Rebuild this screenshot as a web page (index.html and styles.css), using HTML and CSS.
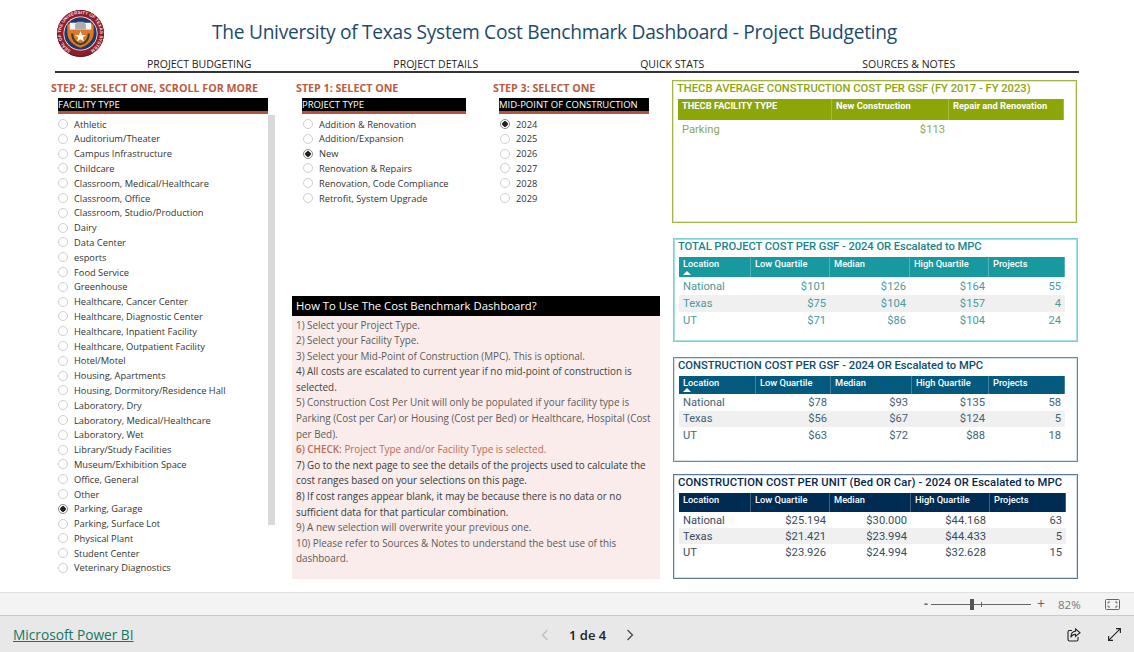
FILE: index.html
```html
<!DOCTYPE html>
<html lang="en">
<head>
<meta charset="utf-8">
<title>The University of Texas System Cost Benchmark Dashboard</title>
<link rel="stylesheet" href="styles.css">
</head>
<body>
<div class="canvas">
  <header class="head">
    <svg class="logo" viewBox="0 0 48 48" aria-hidden="true">
      <defs><path id="ring" d="M24 24m-20 0a20 20 0 1 1 40 0a20 20 0 1 1 -40 0"/></defs>
      <circle cx="24" cy="24" r="24" fill="#8f1d2c"/>
      <circle cx="24" cy="24" r="23.4" fill="none" stroke="#5e1320" stroke-width="1"/>
      <text class="logo-text" transform="rotate(-60 24 24)"><textPath href="#ring">SEAL OF THE UNIVERSITY OF TEXAS SYSTEM</textPath></text>
      <circle cx="24" cy="24" r="17.4" fill="#fff"/>
      <circle cx="24" cy="24" r="16.6" fill="#1f3a68"/>
      <path d="M10.5 14.5H37.5V23C37.5 31 31 36.5 24 38.5C17 36.5 10.5 31 10.5 23Z" fill="#e2762a"/>
      <path d="M13 13H35V20H13Z" fill="#f4f4f2"/>
      <path d="M18.5 20V14.5L21 12H27L29.5 14.5V20Z" fill="#a9aeb4"/>
      <path d="M15.5 24C15.5 31 20 34.5 24 35C28 34.5 32.500 31 32.500 24" fill="none" stroke="#2d4a2a" stroke-width="2"/>
      <path d="M24 21.500L25.500 25.500L29.700 25.600L26.300 28.100L27.600 32.200L24 29.800L20.400 32.200L21.700 28.100L18.300 25.600L22.500 25.500Z" fill="#fff"/>
    </svg>
    <h1 class="title">The University of Texas System Cost Benchmark Dashboard - Project Budgeting</h1>
  </header>
  <nav class="nav">
    <a>PROJECT BUDGETING</a>
    <a>PROJECT DETAILS</a>
    <a>QUICK STATS</a>
    <a>SOURCES &amp; NOTES</a>
  </nav>
  <main class="main">
    <section class="col-facility">
      <h2 class="step">STEP 2: SELECT ONE, SCROLL FOR MORE</h2>
      <div class="slicer-head facility-head">FACILITY TYPE</div>
      <div class="scroll-wrap">
        <ul class="list">
          <li class="opt"><i class="radio"></i>Athletic</li>
          <li class="opt"><i class="radio"></i>Auditorium/Theater</li>
          <li class="opt"><i class="radio"></i>Campus Infrastructure</li>
          <li class="opt"><i class="radio"></i>Childcare</li>
          <li class="opt"><i class="radio"></i>Classroom, Medical/Healthcare</li>
          <li class="opt"><i class="radio"></i>Classroom, Office</li>
          <li class="opt"><i class="radio"></i>Classroom, Studio/Production</li>
          <li class="opt"><i class="radio"></i>Dairy</li>
          <li class="opt"><i class="radio"></i>Data Center</li>
          <li class="opt"><i class="radio"></i>esports</li>
          <li class="opt"><i class="radio"></i>Food Service</li>
          <li class="opt"><i class="radio"></i>Greenhouse</li>
          <li class="opt"><i class="radio"></i>Healthcare, Cancer Center</li>
          <li class="opt"><i class="radio"></i>Healthcare, Diagnostic Center</li>
          <li class="opt"><i class="radio"></i>Healthcare, Inpatient Facility</li>
          <li class="opt"><i class="radio"></i>Healthcare, Outpatient Facility</li>
          <li class="opt"><i class="radio"></i>Hotel/Motel</li>
          <li class="opt"><i class="radio"></i>Housing, Apartments</li>
          <li class="opt"><i class="radio"></i>Housing, Dormitory/Residence Hall</li>
          <li class="opt"><i class="radio"></i>Laboratory, Dry</li>
          <li class="opt"><i class="radio"></i>Laboratory, Medical/Healthcare</li>
          <li class="opt"><i class="radio"></i>Laboratory, Wet</li>
          <li class="opt"><i class="radio"></i>Library/Study Facilities</li>
          <li class="opt"><i class="radio"></i>Museum/Exhibition Space</li>
          <li class="opt"><i class="radio"></i>Office, General</li>
          <li class="opt"><i class="radio"></i>Other</li>
          <li class="opt"><i class="radio on"></i>Parking, Garage</li>
          <li class="opt"><i class="radio"></i>Parking, Surface Lot</li>
          <li class="opt"><i class="radio"></i>Physical Plant</li>
          <li class="opt"><i class="radio"></i>Student Center</li>
          <li class="opt"><i class="radio"></i>Veterinary Diagnostics</li>
        </ul>
        <div class="scrollbar"></div>
      </div>
    </section>
    <section class="col-middle">
      <div class="slicers">
        <div class="slicer-project">
          <h2 class="step">STEP 1: SELECT ONE</h2>
          <div class="slicer-head project-head">PROJECT TYPE</div>
          <ul class="list list-inset">
            <li class="opt"><i class="radio"></i>Addition &amp; Renovation</li>
            <li class="opt"><i class="radio"></i>Addition/Expansion</li>
            <li class="opt"><i class="radio on"></i>New</li>
            <li class="opt"><i class="radio"></i>Renovation &amp; Repairs</li>
            <li class="opt"><i class="radio"></i>Renovation, Code Compliance</li>
            <li class="opt"><i class="radio"></i>Retrofit, System Upgrade</li>
          </ul>
        </div>
        <div class="slicer-mpc">
          <h2 class="step">STEP 3: SELECT ONE</h2>
          <div class="slicer-head mpc-head">MID-POINT OF CONSTRUCTION</div>
          <ul class="list list-inset">
            <li class="opt"><i class="radio on"></i>2024</li>
            <li class="opt"><i class="radio"></i>2025</li>
            <li class="opt"><i class="radio"></i>2026</li>
            <li class="opt"><i class="radio"></i>2027</li>
            <li class="opt"><i class="radio"></i>2028</li>
            <li class="opt"><i class="radio"></i>2029</li>
          </ul>
        </div>
      </div>
      <article class="help">
        <h2 class="help-title">How To Use The Cost Benchmark Dashboard?</h2>
        <div class="help-body">
          <p>1) Select your Project Type.</p>
          <p>2) Select your Facility Type.</p>
          <p>3) Select your Mid-Point of Construction (MPC). This is optional.</p>
          <p class="strong">4) All costs are escalated to current year if no mid-point of construction is selected.</p>
          <p>5) Construction Cost Per Unit will only be populated if your facility type is Parking (Cost per Car) or Housing (Cost per Bed) or Healthcare, Hospital (Cost per Bed).</p>
          <p class="check"><b>6) CHECK:</b> Project Type and/or Facility Type is selected.</p>
          <p class="dark">7) Go to the next page to see the details of the projects used to calculate the cost ranges based on your selections on this page.</p>
          <p class="dark">8) If cost ranges appear blank, it may be because there is no data or no sufficient data for that particular combination.</p>
          <p>9) A new selection will overwrite your previous one.</p>
          <p>10) Please refer to Sources &amp; Notes to understand the best use of this dashboard.</p>
        </div>
      </article>
    </section>
    <section class="col-tables">
      <div class="card card-thecb">
        <h3 class="card-title">THECB AVERAGE CONSTRUCTION COST PER GSF (FY 2017 - FY 2023)</h3>
        <div class="tbl">
          <div class="th">THECB FACILITY TYPE</div><div class="th">New Construction</div><div class="th">Repair and Renovation</div>
          <div class="td">Parking</div><div class="td num">$113</div><div class="td num"></div>
        </div>
      </div>
      <div class="card card-total">
        <h3 class="card-title">TOTAL PROJECT COST PER GSF - 2024 OR Escalated to MPC</h3>
        <div class="tbl">
          <div class="th sorted">Location</div><div class="th">Low Quartile</div><div class="th">Median</div><div class="th">High Quartile</div><div class="th">Projects</div>
          <div class="td">National</div><div class="td num">$101</div><div class="td num">$126</div><div class="td num">$164</div><div class="td num">55</div>
          <div class="td alt">Texas</div><div class="td alt num">$75</div><div class="td alt num">$104</div><div class="td alt num">$157</div><div class="td alt num">4</div>
          <div class="td">UT</div><div class="td num">$71</div><div class="td num">$86</div><div class="td num">$104</div><div class="td num">24</div>
        </div>
      </div>
      <div class="card card-cons">
        <h3 class="card-title">CONSTRUCTION COST PER GSF - 2024 OR Escalated to MPC</h3>
        <div class="tbl">
          <div class="th sorted">Location</div><div class="th">Low Quartile</div><div class="th">Median</div><div class="th">High Quartile</div><div class="th">Projects</div>
          <div class="td">National</div><div class="td num">$78</div><div class="td num">$93</div><div class="td num">$135</div><div class="td num">58</div>
          <div class="td alt">Texas</div><div class="td alt num">$56</div><div class="td alt num">$67</div><div class="td alt num">$124</div><div class="td alt num">5</div>
          <div class="td">UT</div><div class="td num">$63</div><div class="td num">$72</div><div class="td num">$88</div><div class="td num">18</div>
        </div>
      </div>
      <div class="card card-unit">
        <h3 class="card-title">CONSTRUCTION COST PER UNIT (Bed OR Car) - 2024 OR Escalated to MPC</h3>
        <div class="tbl">
          <div class="th">Location</div><div class="th">Low Quartile</div><div class="th">Median</div><div class="th">High Quartile</div><div class="th">Projects</div>
          <div class="td">National</div><div class="td num">$25.194</div><div class="td num">$30.000</div><div class="td num">$44.168</div><div class="td num">63</div>
          <div class="td alt">Texas</div><div class="td alt num">$21.421</div><div class="td alt num">$23.994</div><div class="td alt num">$44.433</div><div class="td alt num">5</div>
          <div class="td">UT</div><div class="td num">$23.926</div><div class="td num">$24.994</div><div class="td num">$32.628</div><div class="td num">15</div>
        </div>
      </div>
    </section>
  </main>
</div>
<div class="statusbar">
  <span class="zoom-sign">-</span>
  <div class="slider"><span class="thumb"></span><span class="tick"></span></div>
  <span class="zoom-plus">+</span>
  <span class="zoom-val">82%</span>
  <svg class="fit" viewBox="0 0 15 11" aria-hidden="true"><rect x=".5" y=".5" width="14" height="10" rx="1" fill="none" stroke="#666"/><path d="M3 4.500V3H5M10 3H12V4.500M12 6.500V8H10M5 8H3V6.500" fill="none" stroke="#666"/></svg>
</div>
<footer class="footer">
  <a class="pbi">Microsoft Power BI</a>
  <div class="pager">
    <svg class="chev" viewBox="0 0 8 12" aria-hidden="true"><path d="M6.500 1L1.500 6L6.500 11" fill="none" stroke="#bdbdbd" stroke-width="1.200"/></svg>
    <span class="page-no">1 de 4</span>
    <svg class="chev" viewBox="0 0 8 12" aria-hidden="true"><path d="M1.500 1L6.500 6L1.500 11" fill="none" stroke="#444" stroke-width="1.200"/></svg>
  </div>
  <div class="foot-icons">
    <svg class="share" viewBox="0 0 14 14" aria-hidden="true"><path d="M5 2.500H2.500Q1 2.500 1 4V11.500Q1 13 2.500 13H9.500Q11 13 11 11.500V9" fill="none" stroke="#222" stroke-width="1.100"/><path d="M8.500 1L13 4.700L8.500 8.400V6.200C6.500 6.200 5 7 3.800 9.200C3.900 6 5.500 3.300 8.500 3.200Z" fill="none" stroke="#222" stroke-width="1.100"/></svg>
    <svg class="expand" viewBox="0 0 13 13" aria-hidden="true"><path d="M8 .6H12.400V5M12.400 .6L.6 12.400M.6 8V12.400H5" fill="none" stroke="#222" stroke-width="1.100"/></svg>
  </div>
</footer>
</body>
</html>
```
FILE: styles.css
```css
* { box-sizing: border-box; }
html, body { margin: 0; padding: 0; }
body { width: 1134px; height: 652px; overflow: hidden; background: #fff; font-family: "Open Sans", "Noto Sans", sans-serif; color: #333; }
h1, h2, h3, p, ul { margin: 0; padding: 0; }
ul { list-style: none; }

.canvas { height: 592px; overflow: hidden; }
.head { display: flex; align-items: center; height: 57px; padding: 10px 0 0 57px; }
.logo { width: 47px; height: 47px; flex: none; }
.logo-text { font: 700 4.600px "Liberation Sans", sans-serif; fill: #f2dfe0; }
.title { margin-left: 108px; margin-top: -5px; font-size: 19.200px; font-weight: 400; color: #1d4a6b; white-space: nowrap; letter-spacing: -.29px; }

.nav { display: grid; grid-template-columns: repeat(4, 236.5px); height: 14px; margin: 0 55px; padding-left: 26px; font-size: 10.5px; line-height: 15px; color: #222; text-align: center; box-shadow: 0 2px 0 #333; }
.main { display: grid; grid-template-columns: 241px 380px 407px; padding: 10px 0 0 51px; }

.step { font-size: 10.700px; line-height: 14px; font-weight: 700; color: #b95c3f; white-space: nowrap; }
.slicer-head { height: 16px; margin-top: 3px; background: #000; border-bottom: 3px solid #b5533c; color: #fff; font-size: 9.500px; line-height: 14px; white-space: nowrap; }
.facility-head { width: 210px; margin-left: 7px; }
.project-head { width: 164px; margin-left: 6px; }
.mpc-head { width: 150px; margin-left: 6px; }

.scroll-wrap { display: flex; align-items: flex-start; margin-left: 7px; }
.list { width: 210px; padding-top: 2.700px; }
.list-inset { padding-left: 7px; }
.opt { display: flex; align-items: center; gap: 6px; height: 14.800px; font-size: 9.300px; color: #333; white-space: nowrap; }
.radio { width: 10px; height: 10px; flex: none; border: 1px solid #cfcfcf; border-radius: 50%; background: #fff; }
.radio.on { border-color: #888; background: radial-gradient(circle, #222 0 2.500px, #fff 3px); }
.scrollbar { width: 7px; height: 410px; margin-top: 1px; background: #d9d9d9; }

.col-middle { display: flex; flex-direction: column; }
.slicers { display: grid; grid-template-columns: 197px 170px; height: 215px; padding-left: 4px; }
.help { width: 368px; height: 283px; background: #f9ecea; }
.help-title { height: 20px; padding-left: 4px; background: #000; color: #fff; font-size: 11.300px; line-height: 19px; font-weight: 400; }
.help-body { padding: 1.500px 4px 0; font-size: 9.900px; line-height: 15.600px; color: #5c5c5c; }
.help-body .strong { color: #444; }
.help-body .dark { color: #3a3a3a; }
.help-body .check { color: #bd6a55; }
.help-body .check b { font-weight: 600; }

.col-tables { display: flex; flex-direction: column; margin-top: -1px; }
.card { width: 405px; border: 1px solid; padding: 2px 0 0 5px; margin-left: 1px; }
.card-title { margin-left: -1px; font-family: Roboto, "Liberation Sans", sans-serif; font-size: 11.200px; line-height: 12px; font-weight: 500; white-space: nowrap; }
.tbl { display: grid; width: 386px; margin-top: 4px; font-family: Roboto, "Liberation Sans", sans-serif; }
.th { position: relative; padding: 1px 4px 0; color: #fff; font-size: 9.300px; line-height: 12px; font-weight: 500; white-space: nowrap; border-right: 1px solid rgba(255,255,255,.25); }
.td { display: flex; align-items: center; padding: 0 4px; font-size: 11.200px; }
.num { justify-content: flex-end; }
.alt { background: #f0f0f0; }
.sorted::after { content: ""; position: absolute; left: 4px; bottom: 2px; border: 4px solid transparent; border-top: 0; border-bottom: 4px solid #fff; }

.card-thecb { height: 143px; margin-left: 0; border-color: #a3b545; box-shadow: inset 0 0 0 1px #e3e8bd; }
.card-thecb .card-title { color: #8fa608; }
.card-thecb .tbl { grid-template-columns: 154px 117px 115px; grid-template-rows: 21px 18px; }
.card-thecb .th { background: #8da507; font-weight: 700; }
.card-thecb .td { color: #8fa652; }

.card-total { height: 104px; margin-top: 15px; border-color: #7fcdce; box-shadow: inset 0 0 0 1px #a8dfe0; }
.card-total .card-title { color: #17858c; letter-spacing: -.05px; }
.card-total .tbl { grid-template-columns: 72px 79px 80px 79px 76px; grid-template-rows: 20px 18px 17px 17px; }
.card-total .th { background: #18999f; }
.card-total .td { color: #4b9a9e; }

.card-cons { height: 105px; margin-top: 15px; border-color: #5f8da3; box-shadow: inset 0 0 0 1px #d5e1e7; }
.card-cons .card-title { color: #0b4d6c; }
.card-cons .tbl { grid-template-columns: 77px 75px 81px 77px 76px; grid-template-rows: 18px repeat(3, 16.500px); }
.card-cons .th { background: #045a7e; }
.card-cons .td { color: #3f6478; }

.card-unit { height: 105px; margin-top: 12px; border-color: #5b7a97; box-shadow: inset 0 0 0 1px #d5dee6; }
.card-unit .card-title { color: #00264a; letter-spacing: .11px; }
.card-unit .tbl { grid-template-columns: 72px 79px 81px 79px 76px; width: 387px; grid-template-rows: 19px repeat(3, 16px); }
.card-unit .th { background: #002c54; }
.card-unit .td { color: #3a4b5e; }

.statusbar { display: flex; align-items: center; justify-content: flex-end; height: 24px; padding-right: 14px; background: #f3f3f3; border-top: 1px solid #e0e0e0; border-bottom: 1px solid #c9c9c9; font-size: 12px; color: #666; }
.zoom-sign { width: 7px; font-weight: 700; line-height: 1; }
.slider { position: relative; width: 100px; height: 1px; background: #666; }
.thumb { position: absolute; left: 39px; top: -5px; width: 4px; height: 11px; background: #555; }
.tick { position: absolute; left: 50px; top: -2px; width: 1px; height: 5px; background: #666; }
.zoom-plus { margin-left: 4px; font-size: 14px; line-height: 1; width: 12px; text-align: center; }
.zoom-val { margin-left: 11px; width: 25px; font-size: 11.500px; color: #777; }
.fit { width: 15px; height: 11px; margin-left: 22px; }

.footer { display: grid; grid-template-columns: 528px auto 1fr; align-items: center; height: 37px; padding: 0 13px; background: #e8e8e8; }
.pbi { font-size: 13.700px; color: #117865; text-decoration: underline; white-space: nowrap; }
.pager { display: flex; align-items: center; gap: 20px; }
.chev { width: 8px; height: 12px; }
.page-no { font-size: 13px; font-weight: 600; color: #222; }
.foot-icons { display: flex; justify-content: flex-end; align-items: center; gap: 27px; }
.share { width: 14px; height: 14px; }
.expand { width: 13px; height: 13px; }
```
